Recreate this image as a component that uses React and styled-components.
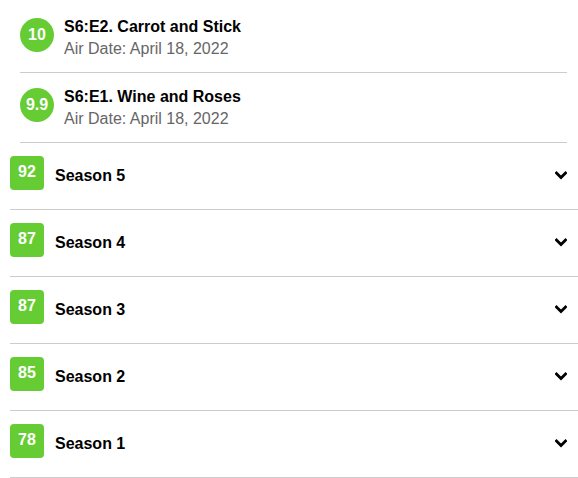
import styled, { createGlobalStyle } from "styled-components";

const GlobalStyle = createGlobalStyle`
  body {
    margin: 0;
    background: #fff;
    font-family: "Liberation Sans", Arial, sans-serif;
    color: #000;
  }
`;

const Wrap = styled.div`
  padding-left: 10px;
  width: 568px;
`;

const EpisodeList = styled.div`
  padding: 3px 11px 0 10px;
`;

const Episode = styled.div`
  display: flex;
  align-items: flex-start;
  gap: 10px;
  height: 55px;
  padding-top: 14px;
  border-bottom: 1px solid #ccc;
`;

const Score = styled.div`
  width: 34px;
  height: 34px;
  flex-shrink: 0;
  margin-top: ${(props) => (props.round ? "1px" : "0")};
  border-radius: ${(props) => (props.round ? "50%" : "4px")};
  background: #66cc33;
  color: #fff;
  font-weight: 700;
  font-size: 16px;
  line-height: 18px;
  display: flex;
  align-items: center;
  justify-content: center;
  padding-bottom: ${(props) => (props.round ? "0" : "2px")};
  box-sizing: border-box;
`;

const Info = styled.div`
  display: flex;
  flex-direction: column;
  padding-top: 1px;
`;

const Title = styled.div`
  font-size: 16px;
  font-weight: 700;
  line-height: 18px;
`;

const AirDate = styled.div`
  font-size: 16px;
  line-height: 18px;
  margin-top: 4px;
  color: #666;
`;

const Season = styled.div`
  display: flex;
  align-items: center;
  height: 34px;
  padding: 13px 11px 19px 0;
  border-bottom: 1px solid #ccc;
`;

const SeasonName = styled.div`
  flex: 1;
  margin-left: 11px;
  font-size: 16px;
  font-weight: 700;
  line-height: 18px;
  padding-top: 5px;
`;

const ChevronBox = styled.div`
  display: flex;
  padding-top: 4px;
`;

const Chevron = () => (
  <ChevronBox>
    <svg width="12" height="9" viewBox="0 0 12 9">
      <path
        d="M1.5 2 L6 6.5 L10.5 2"
        fill="none"
        stroke="#000"
        strokeWidth="2.8"
        strokeLinecap="square"
      />
    </svg>
  </ChevronBox>
);

const episodes = [
  { score: "10", title: "S6:E2. Carrot and Stick", date: "April 18, 2022" },
  { score: "9.9", title: "S6:E1. Wine and Roses", date: "April 18, 2022" },
];

const seasons = [
  { score: 92, name: "Season 5" },
  { score: 87, name: "Season 4" },
  { score: 87, name: "Season 3" },
  { score: 85, name: "Season 2" },
  { score: 78, name: "Season 1" },
];

export default function App() {
  return (
    <Wrap>
      <GlobalStyle />
      <EpisodeList>
        {episodes.map((ep) => (
          <Episode key={ep.title}>
            <Score round>{ep.score}</Score>
            <Info>
              <Title>{ep.title}</Title>
              <AirDate>Air Date: {ep.date}</AirDate>
            </Info>
          </Episode>
        ))}
      </EpisodeList>
      {seasons.map((s) => (
        <Season key={s.name}>
          <Score>{s.score}</Score>
          <SeasonName>{s.name}</SeasonName>
          <Chevron />
        </Season>
      ))}
    </Wrap>
  );
}
